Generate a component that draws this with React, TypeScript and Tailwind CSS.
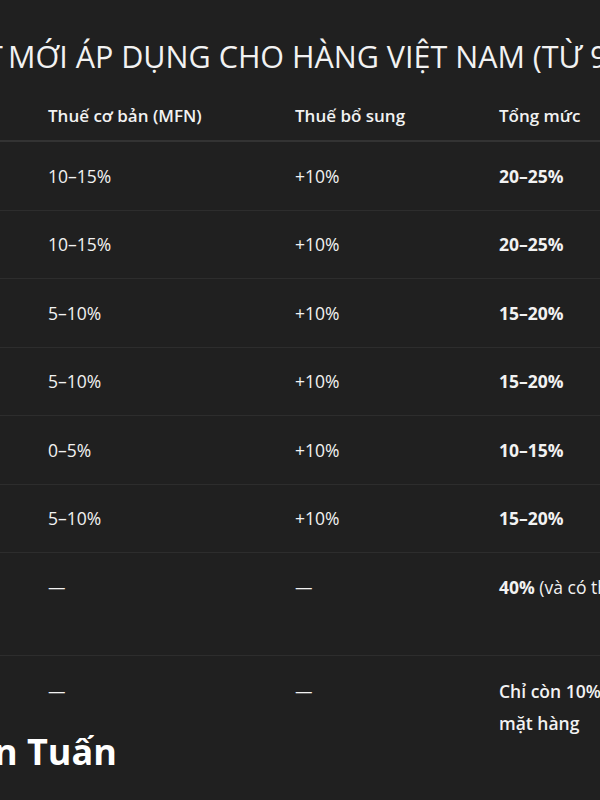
import React from "react";

const rows: [string, string, string][] = [
  ["10–15%", "+10%", "20–25%"],
  ["10–15%", "+10%", "20–25%"],
  ["5–10%", "+10%", "15–20%"],
  ["5–10%", "+10%", "15–20%"],
  ["0–5%", "+10%", "10–15%"],
  ["5–10%", "+10%", "15–20%"],
];

export default function App() {
  return (
    <div
      className="w-[600px] h-[800px] overflow-hidden bg-[#202020] text-[#f2f2f2]"
      style={{ fontFamily: '"Open Sans", "Noto Sans", sans-serif' }}
    >
      {/* Title */}
      <div className="flex h-[92px] pt-[36px] text-[30.5px] font-medium leading-[40px] whitespace-nowrap">
        <div className="w-[8px] shrink-0 flex justify-end">
          <span className="shrink-0">THUẾ SUẤT{"\u2006"}</span>
        </div>
        <span>MỚI ÁP DỤNG CHO HÀNG VIỆT NAM (TỪ 9/4/2025)</span>
      </div>

      {/* Header */}
      <div className="grid grid-cols-[32px_247px_204px_320px] h-[50px] items-center border-b-2 border-[#333333] text-[17px] font-semibold whitespace-nowrap">
        <div />
        <div className="pl-4">Thuế cơ bản (MFN)</div>
        <div className="pl-4">Thuế bổ sung</div>
        <div className="pl-4">Tổng mức</div>
      </div>

      {rows.map((r, i) => (
        <div
          key={i}
          className="grid grid-cols-[32px_247px_204px_320px] h-[68.5px] items-center border-b border-[#2d2d2d] text-[17.5px] font-medium whitespace-nowrap"
        >
          <div />
          <div className="pl-4">{r[0]}</div>
          <div className="pl-4">{r[1]}</div>
          <div className="pl-4 font-bold">{r[2]}</div>
        </div>
      ))}

      <div className="grid grid-cols-[32px_247px_204px_320px] h-[103px] border-b border-[#2d2d2d] text-[17.5px] font-medium leading-[32px] pt-[18px] whitespace-nowrap">
        <div />
        <div className="pl-4">—</div>
        <div className="pl-4">—</div>
        <div className="pl-4">
          <span className="font-bold">40%</span> (và có thể cao hơn)
        </div>
      </div>

      <div className="grid grid-cols-[32px_247px_204px_320px] h-[76px] text-[17.5px] font-medium leading-[32px] pt-[19px] whitespace-nowrap">
        <div />
        <div className="pl-4">—</div>
        <div className="pl-4">—</div>
        <div className="pl-4 font-semibold">
          Chỉ còn 10% cho một số
          <br />
          mặt hàng
        </div>
      </div>

      {/* Heading */}
      <div className="flex text-[36px] font-bold leading-[40px] whitespace-nowrap text-white">
        <div className="w-[27px] shrink-0 flex justify-end">
          <span className="shrink-0">Trần&nbsp;</span>
        </div>
        <span>Tuấn</span>
      </div>
    </div>
  );
}
